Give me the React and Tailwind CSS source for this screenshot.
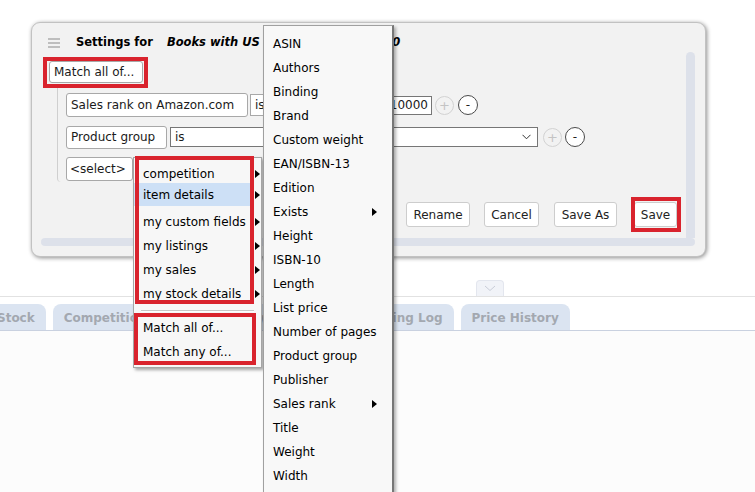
import React from 'react';

const Arrow = ({ className = '' }) => (
  <span className={`inline-block h-0 w-0 border-y-[4px] border-l-[5px] border-y-transparent border-l-black ${className}`} />
);

const Plus = ({ className = '' }) => (
  <span className={`flex h-[19px] w-[19px] items-center justify-center rounded-full border border-[#d2d2d2] text-[13px] leading-none text-[#c4c4c4] ${className}`}>+</span>
);

const Minus = ({ className = '' }) => (
  <span className={`flex h-[20px] w-[20px] items-center justify-center rounded-full border border-[#4a4a4a] bg-white text-[12px] leading-none text-[#222] ${className}`}>-</span>
);

const fieldItems = [
  ['ASIN'], ['Authors'], ['Binding'], ['Brand'], ['Custom weight'], ['EAN/ISBN-13'], ['Edition'],
  ['Exists', true], ['Height'], ['ISBN-10'], ['Length'], ['List price'], ['Number of pages'],
  ['Product group'], ['Publisher'], ['Sales rank', true], ['Title'], ['Weight'], ['Width'],
];

const groups = ['competition', 'item details', 'my custom fields', 'my listings', 'my sales', 'my stock details'];

function Dialog() {
  return (
    <div className="flex h-[235px] w-[675px] flex-col rounded-[9px] border border-[#c2c2c2] bg-[#f2f2f2] shadow-[1px_1px_4px_rgba(0,0,0,0.45)]">
      {/* header */}
      <div className="flex h-[29px] items-center pl-[16px] pt-[10px]">
        <svg width="12" height="10" viewBox="0 0 12 10" className="mt-[1px]">
          <path d="M0 1h12M0 5h12M0 9h12" stroke="#8a8a8a" strokeWidth="1.2" />
        </svg>
        <span className="ml-[16px] text-[11.5px] font-bold text-black">Settings for</span>
        <span className="ml-[14px] text-[11.5px] font-bold italic text-black">Books with US sales rank under 100</span>
      </div>

      {/* body with scrollbars */}
      <div className="flex flex-1 flex-col pb-[10px] pl-[9px] pr-[10px]">
        <div className="flex flex-1">
          <div className="flex flex-1 flex-col">
            <div className="mt-[9px] pl-[8px]">
              <button className="h-[22px] w-[94px] rounded-[3px] border border-[#a8a8a8] bg-white pl-[4px] text-left text-[12px]">Match all of...</button>
            </div>

            <div className="ml-[16px] mt-[4px] flex flex-col gap-[8px] rounded-bl-[4px] border-l border-[#cfcfcf] pb-[1px] pl-[8px] pt-[6px]">
              <div className="flex h-[24px] items-center">
                <button className="h-[24px] w-[182px] rounded-[3px] border border-[#a8a8a8] bg-white pl-[4px] text-left">Sales rank on Amazon.com</button>
                <div className="ml-[2px] flex h-[22px] w-[98px] items-center border border-[#a8a8a8] bg-white pl-[4px]">is less than</div>
                <div className="ml-[2px] flex h-[19px] w-[82px] items-center justify-end border border-[#767676] bg-white pr-[3px]">10000</div>
                <Plus className="ml-[3px]" />
                <Minus className="ml-[4px]" />
              </div>
              <div className="flex h-[24px] items-center">
                <button className="h-[23px] w-[101px] rounded-[3px] border border-[#a8a8a8] bg-white pl-[4px] text-left">Product group</button>
                <div className="ml-[3px] flex h-[20px] w-[368px] items-center justify-between border border-[#767676] bg-white pl-[4px] pr-[6px]">
                  <span>is</span>
                  <svg width="9" height="6" viewBox="0 0 9 6">
                    <path d="M0.5 0.8L4.5 4.8L8.5 0.8" fill="none" stroke="#333" strokeWidth="1" />
                  </svg>
                </div>
                <Plus className="ml-[5px]" />
                <Minus className="ml-[3px]" />
              </div>
              <div className="flex h-[24px] items-center">
                <button className="h-[24px] w-[67px] rounded-[3px] border border-[#a8a8a8] bg-white pl-[3px] text-left">&lt;select&gt;</button>
              </div>
            </div>

            <div className="mt-[20px] flex justify-end pr-[9px]">
              <button className="h-[25px] w-[64px] rounded-[3px] border border-[#cdcdcd] bg-white text-[#222]">Rename</button>
              <button className="ml-[14px] h-[25px] w-[55px] rounded-[3px] border border-[#cdcdcd] bg-white text-[#222]">Cancel</button>
              <button className="ml-[15px] h-[25px] w-[63px] rounded-[3px] border border-[#cdcdcd] bg-white text-[#222]">Save As</button>
              <button className="ml-[17px] h-[25px] w-[43px] rounded-[3px] border border-[#cdcdcd] bg-white text-[#222]">Save</button>
            </div>
          </div>
          <div className="w-[9px] rounded-t-full bg-[#dde1ea]" />
        </div>
        <div className="h-[8px] rounded-full bg-[#dde1ea]" />
      </div>
    </div>
  );
}

export default function App() {
  return (
    <div className="relative flex h-[492px] w-[755px] flex-col overflow-hidden bg-white font-['DejaVu_Sans',sans-serif] text-[12px] text-[#1a1a1a]">
      <div className="pl-[31px] pt-[22px]">
        <Dialog />
      </div>

      {/* lower page with tabs */}
      <div className="mt-[23px] flex flex-1 flex-col">
        <div className="flex pl-[476px]">
          <div className="flex h-[16px] w-[28px] items-center justify-center rounded-t-[4px] border border-b-0 border-[#e3e6ee] bg-[#f1f3f8]">
            <svg width="12" height="7" viewBox="0 0 12 7">
              <path d="M1 1L6 5.5L11 1" fill="none" stroke="#c9cdd8" strokeWidth="1" />
            </svg>
          </div>
        </div>
        <div className="border-t border-[#e2e2e2]" />
        <div className="-ml-[14px] mt-[7px] flex gap-[7px] text-[12px] font-bold text-[#a3a8b0]">
          <div className="flex h-[26px] items-center rounded-t-[8px] bg-[#dbe4f1] px-[11px] pt-[2px]">Stock</div>
          <div className="flex h-[26px] items-center rounded-t-[8px] bg-[#dbe4f1] px-[11px] pt-[2px]">Competition</div>
          <div className="flex h-[26px] w-[167px] items-center rounded-t-[8px] bg-[#dbe4f1] px-[11px] pt-[2px]">Sales History</div>
          <div className="flex h-[26px] items-center rounded-t-[8px] bg-[#dbe4f1] px-[11px] pt-[2px]">Repricing Log</div>
          <div className="flex h-[26px] items-center rounded-t-[8px] bg-[#dbe4f1] px-[11px] pt-[2px]">Price History</div>
        </div>
        <div className="border-t border-[#c9d1e0]" />
        <div className="flex-1 bg-[#fcfcfc]" />
      </div>

      {/* first cascade menu */}
      <div className="absolute left-[133px] top-[157px] w-[129px] border border-[#a5a5a5] bg-[#f7f7f7] pb-[3px] pt-[4px] text-black shadow-[2px_2px_3px_rgba(0,0,0,0.35)]">
        {groups.map((g, i) => (
          <div
            key={g}
            className={`flex items-center ${i === 0 ? 'h-[21px] pt-[3px]' : i === 1 ? 'h-[23px]' : 'h-[24px]'} ${i === 2 ? 'mt-[4px]' : ''}`}
          >
            <div className={`flex h-full w-[116px] items-center pl-[9px] ${i === 1 ? 'bg-[#cde0f6]' : ''}`}>{g}</div>
            <Arrow className="ml-[5px]" />
          </div>
        ))}
        <div className="flex h-[10px] items-center px-[7px]">
          <div className="h-[2px] w-full border-t border-[#c8c8c8] bg-white" />
        </div>
        <div className="flex h-[24px] items-center pl-[9px]">Match all of...</div>
        <div className="flex h-[24px] items-center pl-[9px]">Match any of...</div>
      </div>

      {/* second cascade menu */}
      <div className="absolute left-[263px] top-[25px] h-[480px] w-[131px] border border-r-2 border-[#a0a0a0] border-r-[#777] bg-[#f8f8f8] pt-[6px] text-black shadow-[2px_2px_3px_rgba(0,0,0,0.3)]">
        {fieldItems.map(([f, sub]) => (
          <div key={f} className="flex h-[24px] items-center justify-between pl-[9px] pr-[15px]">
            <span>{f}</span>
            {sub && <Arrow />}
          </div>
        ))}
      </div>

      {/* red annotation boxes */}
      <div className="pointer-events-none absolute left-[43px] top-[57px] h-[31px] w-[105px] border-4 border-[#d9232d]" />
      <div className="pointer-events-none absolute left-[631px] top-[197px] h-[35px] w-[50px] border-4 border-[#d9232d]" />
      <div className="pointer-events-none absolute left-[135px] top-[156px] h-[148px] w-[119px] border-4 border-[#d9232d]" />
      <div className="pointer-events-none absolute left-[134px] top-[313px] h-[52px] w-[122px] border-4 border-[#d9232d]" />
    </div>
  );
}
